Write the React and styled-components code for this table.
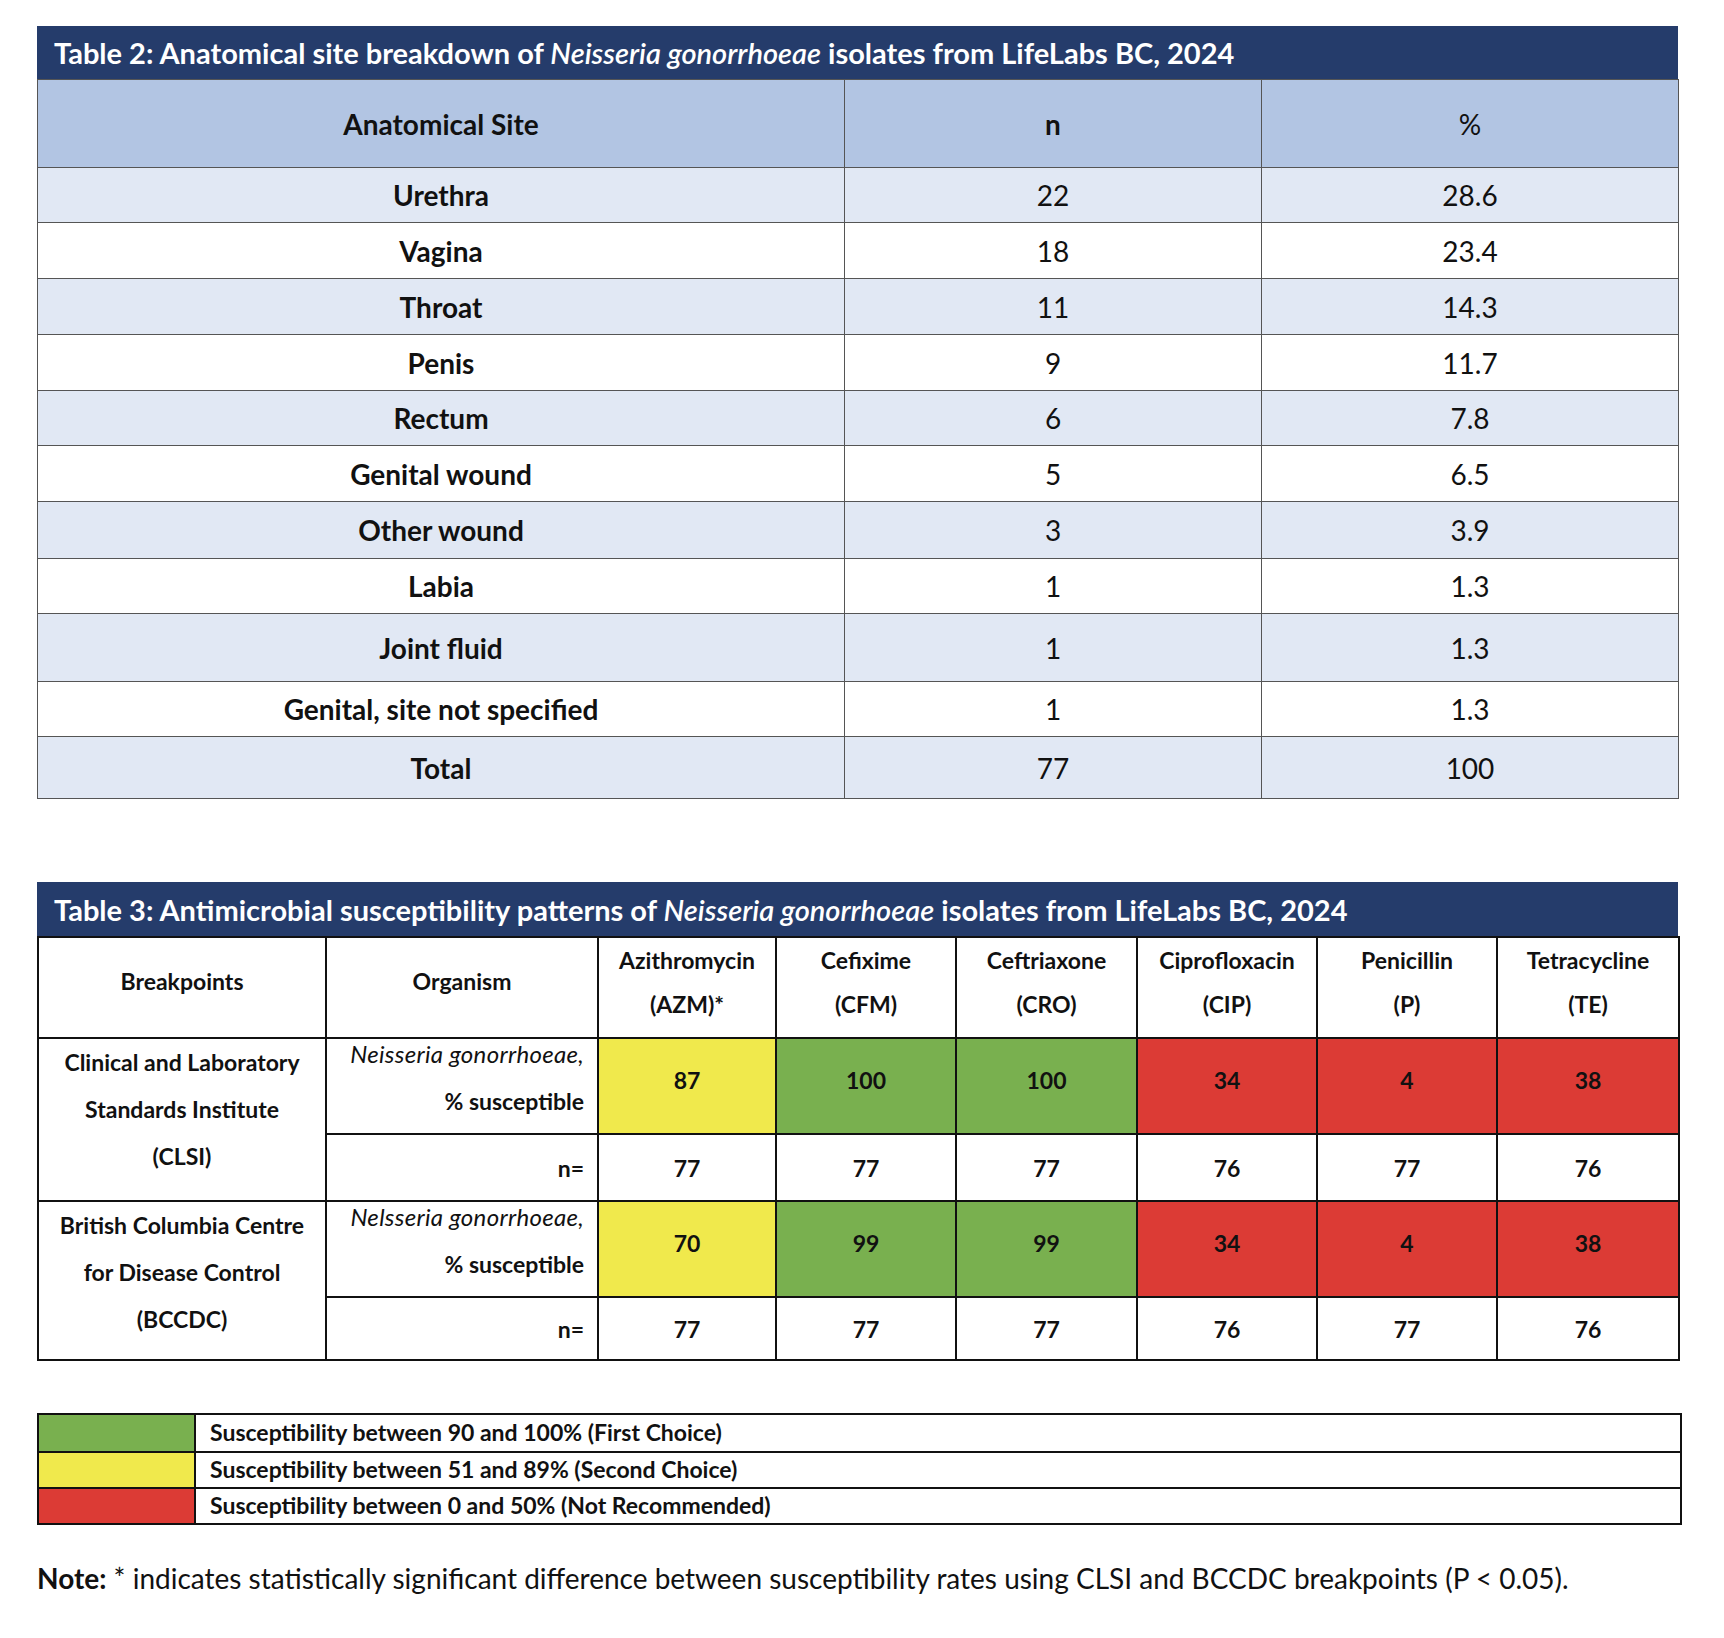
import React from 'react'
import styled, { createGlobalStyle } from 'styled-components'

const Global = createGlobalStyle`
  body {
    margin: 0;
    background: #fff;
    font-family: Lato, "Liberation Sans", sans-serif;
    color: #111;
  }
`

const Page = styled.div`
  width: 1724px;
  padding: 26px 0 40px 37px;
  box-sizing: border-box;
`

const Block = styled.section`
  width: 1641px;
  margin-top: ${p => p.$top || 0}px;
`

const TitleBar = styled.div`
  background: #253c6b;
  color: #fff;
  font-weight: 700;
  font-size: 29px;
  height: ${p => p.$h}px;
  display: flex;
  align-items: center;
  padding-left: 17px;
  box-sizing: border-box;
  white-space: nowrap;
  em { font-weight: 600; }
`

const Col = styled.col`
  width: ${p => p.$w}px;
`

const SiteTable = styled.table`
  width: 1641px;
  border-collapse: collapse;
  table-layout: fixed;
  border-left: 1px solid #555;
  border-right: 1px solid #555;
  border-bottom: 1px solid #555;
`

const SiteHead = styled.th`
  border: 1px solid #555;
  background: #b2c5e3;
  height: 87px;
  font-size: 28px;
  font-weight: ${p => (p.$light ? 400 : 700)};
  padding: 0;
`

const SiteRow = styled.tr`
  background: ${p => (p.$alt ? '#e1e8f4' : '#fff')};
  height: ${p => p.$h}px;
`

const SiteCell = styled.td`
  border: 1px solid #555;
  text-align: center;
  font-size: 28px;
  font-weight: ${p => (p.$bold ? 700 : 400)};
  padding: 0;
`

const SuscTable = styled.table`
  width: 1641px;
  border-collapse: collapse;
  table-layout: fixed;
`

const SuscRow = styled.tr`
  height: ${p => p.$h}px;
`

const SuscHead = styled.th`
  border: 2px solid #111;
  font-size: 23px;
  font-weight: 700;
  line-height: 44px;
  vertical-align: top;
  padding: ${p => (p.$mid ? 21 : 0)}px 0 0;
`

const SourceCell = styled.td`
  border: 2px solid #111;
  text-align: center;
  vertical-align: top;
  font-size: 23px;
  font-weight: 700;
  line-height: 47px;
  padding: 0;
`

const OrgCell = styled.td`
  border: 2px solid #111;
  text-align: right;
  vertical-align: ${p => (p.$top ? 'top' : 'middle')};
  padding: 0 13px 0 0;
  font-size: 23px;
  font-weight: 700;
`

const OrgName = styled.i`
  display: block;
  font-weight: 400;
  font-size: 24px;
  letter-spacing: 0.3px;
  line-height: 30px;
`

const OrgLine = styled.span`
  display: block;
  margin-top: 15px;
  line-height: 34px;
`

const ValueCell = styled.td`
  border: 2px solid #111;
  background: ${p => p.$bg || '#fff'};
  text-align: center;
  font-size: 23px;
  font-weight: 700;
  padding: 0 0 ${p => (p.$bg ? 12 : 0)}px;
`

const Legend = styled.div`
  width: 1641px;
  margin-top: 52px;
  border: 2px solid #111;
  display: grid;
  grid-template-columns: 157px 1fr;
  grid-auto-rows: 36px;
`

const Swatch = styled.div`
  background: ${p => p.$bg};
  border-right: 2px solid #111;
  border-top: ${p => (p.$first ? 'none' : '2px solid #111')};
`

const LegendText = styled.div`
  display: flex;
  align-items: center;
  padding: 0 0 3px 14px;
  font-size: 23px;
  font-weight: 700;
  border-top: ${p => (p.$first ? 'none' : '2px solid #111')};
`

const Note = styled.p`
  margin: 36px 0 0;
  font-size: 28px;
  b { font-weight: 700; }
`

const sites = [
  ['Urethra', 22, '28.6', 55],
  ['Vagina', 18, '23.4', 56],
  ['Throat', 11, '14.3', 56],
  ['Penis', 9, '11.7', 56],
  ['Rectum', 6, '7.8', 55],
  ['Genital wound', 5, '6.5', 56],
  ['Other wound', 3, '3.9', 57],
  ['Labia', 1, '1.3', 55],
  ['Joint fluid', 1, '1.3', 68],
  ['Genital, site not specified', 1, '1.3', 55],
  ['Total', 77, '100', 62],
]

const suscCols = [288, 272, 178, 180, 181, 180, 180, 182]

const drugs = [
  ['Azithromycin', '(AZM)*'],
  ['Cefixime', '(CFM)'],
  ['Ceftriaxone', '(CRO)'],
  ['Ciprofloxacin', '(CIP)'],
  ['Penicillin', '(P)'],
  ['Tetracycline', '(TE)'],
]

const Y = '#f0e94c'
const G = '#79b04f'
const R = '#dc3b35'
const colors = [Y, G, G, R, R, R]

const groups = [
  {
    name: ['Clinical and Laboratory', 'Standards Institute', '(CLSI)'],
    org: 'Neisseria gonorrhoeae,',
    pct: [87, 100, 100, 34, 4, 38],
    n: [77, 77, 77, 76, 77, 76],
    nh: 67,
  },
  {
    name: ['British Columbia Centre', 'for Disease Control', '(BCCDC)'],
    org: 'Nelsseria gonorrhoeae,',
    pct: [70, 99, 99, 34, 4, 38],
    n: [77, 77, 77, 76, 77, 76],
    nh: 63,
  },
]

const legend = [
  [G, 'Susceptibility between 90 and 100% (First Choice)'],
  [Y, 'Susceptibility between 51 and 89% (Second Choice)'],
  [R, 'Susceptibility between 0 and 50% (Not Recommended)'],
]

const App = () => {
  return (
    <Page>
      <Global />
      <Block>
        <TitleBar $h={53}>
          Table 2: Anatomical site breakdown of&nbsp;<em>Neisseria gonorrhoeae</em>&nbsp;isolates from LifeLabs BC, 2024
        </TitleBar>
        <SiteTable>
          <colgroup>
            <Col $w={807} />
            <Col $w={417} />
            <Col $w={417} />
          </colgroup>
          <thead>
            <tr>
              <SiteHead>Anatomical Site</SiteHead>
              <SiteHead>n</SiteHead>
              <SiteHead $light>%</SiteHead>
            </tr>
          </thead>
          <tbody>
            {sites.map(([name, n, pct, h], i) => (
              <SiteRow key={name} $alt={i % 2 === 0} $h={h}>
                <SiteCell $bold>{name}</SiteCell>
                <SiteCell>{n}</SiteCell>
                <SiteCell>{pct}</SiteCell>
              </SiteRow>
            ))}
          </tbody>
        </SiteTable>
      </Block>

      <Block $top={83}>
        <TitleBar $h={54}>
          Table 3: Antimicrobial susceptibility patterns of&nbsp;<em>Neisseria gonorrhoeae</em>&nbsp;isolates from LifeLabs BC, 2024
        </TitleBar>
        <SuscTable>
          <colgroup>
            {suscCols.map((w, i) => <Col key={i} $w={w} />)}
          </colgroup>
          <thead>
            <SuscRow $h={101}>
              <SuscHead $mid>Breakpoints</SuscHead>
              <SuscHead $mid>Organism</SuscHead>
              {drugs.map(([d, a]) => (
                <SuscHead key={d}>{d}<br />{a}</SuscHead>
              ))}
            </SuscRow>
          </thead>
          <tbody>
            {groups.map(g => (
              <React.Fragment key={g.org}>
                <SuscRow $h={96}>
                  <SourceCell rowSpan={2}>
                    {g.name.map(l => <div key={l}>{l}</div>)}
                  </SourceCell>
                  <OrgCell $top>
                    <OrgName>{g.org}</OrgName>
                    <OrgLine>% susceptible</OrgLine>
                  </OrgCell>
                  {g.pct.map((v, i) => (
                    <ValueCell key={i} $bg={colors[i]}>{v}</ValueCell>
                  ))}
                </SuscRow>
                <SuscRow $h={g.nh}>
                  <OrgCell>n=</OrgCell>
                  {g.n.map((v, i) => (
                    <ValueCell key={i}>{v}</ValueCell>
                  ))}
                </SuscRow>
              </React.Fragment>
            ))}
          </tbody>
        </SuscTable>
      </Block>

      <Legend>
        {legend.map(([c, t], i) => (
          <React.Fragment key={t}>
            <Swatch $bg={c} $first={i === 0} />
            <LegendText $first={i === 0}>{t}</LegendText>
          </React.Fragment>
        ))}
      </Legend>

      <Note>
        <b>Note:</b> * indicates statistically significant difference between susceptibility rates using CLSI and BCCDC breakpoints (P &lt; 0.05).
      </Note>
    </Page>
  )
}

export default App
